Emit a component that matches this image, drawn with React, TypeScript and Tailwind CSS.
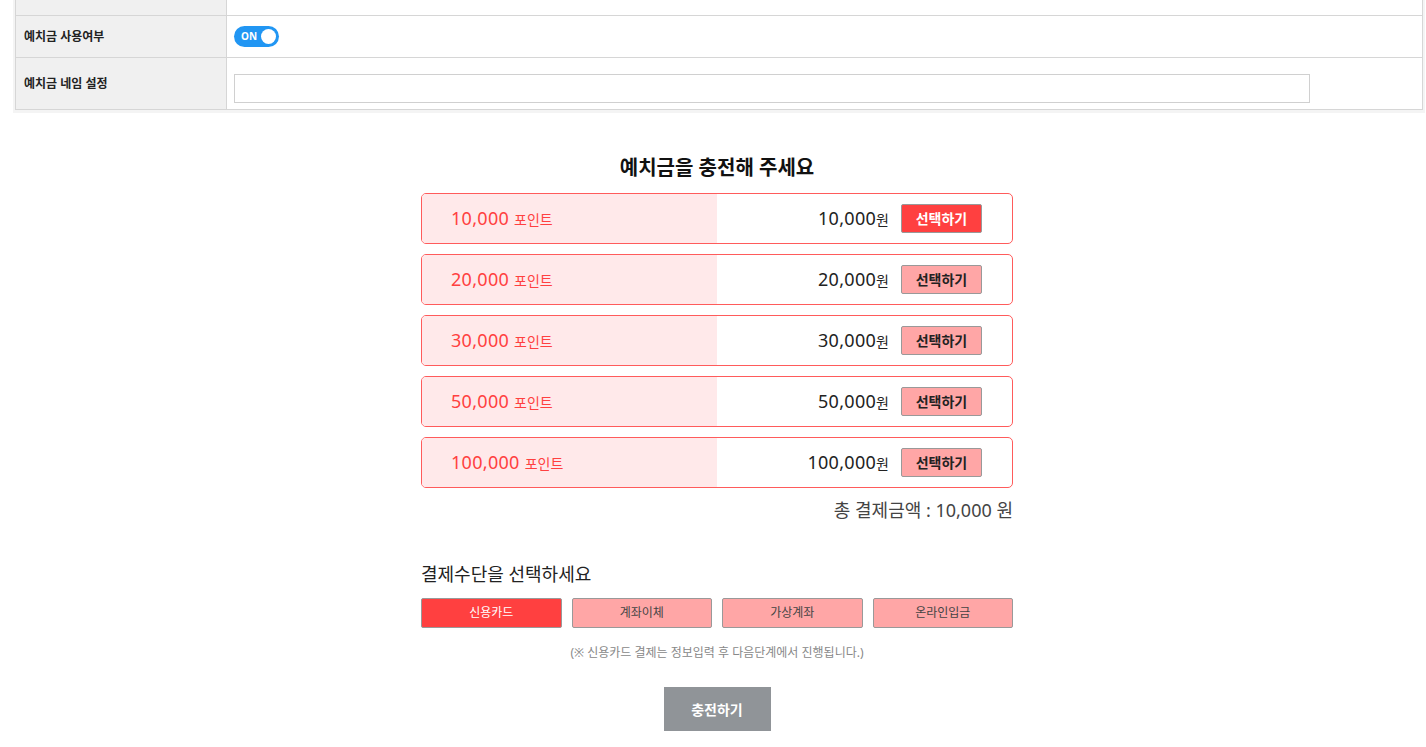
import { useState } from 'react';

const FONT = { fontFamily: '"Noto Sans", "Noto Sans CJK KR", sans-serif' };

const amounts = [10000, 20000, 30000, 50000, 100000];
const methods = ['신용카드', '계좌이체', '가상계좌', '온라인입금'];

const fmt = (n: number) => n.toLocaleString('en-US');

const App = () => {
  const [selected, setSelected] = useState(0);
  const [method, setMethod] = useState(0);

  return (
    <div className="min-h-[747px] bg-white text-[#333]" style={FONT}>
      {/* settings table */}
      <div className="ml-[13px] mr-[1px] bg-[#f4f4f4] px-[2px] pb-[3px]">
        <div className="border-x border-b border-[#d6d6d6] bg-white">
          <div className="flex h-[16px] border-b border-[#d6d6d6]">
            <div className="w-[211px] border-r border-[#d6d6d6] bg-[#f0f0f0]" />
            <div className="flex-1" />
          </div>
          <div className="flex h-[42px] border-b border-[#d6d6d6]">
            <div className="flex w-[211px] items-center border-r border-[#d6d6d6] bg-[#f0f0f0] pl-[8px] text-[12px] font-bold text-[#222]">
              예치금 사용여부
            </div>
            <div className="flex flex-1 items-center pl-[7px]">
              <div className="flex h-[21px] w-[45px] items-center justify-between rounded-full bg-[#2196f3] pl-[7px] pr-[3px]">
                <span className="text-[10px] font-bold text-white">ON</span>
                <span className="h-[15px] w-[15px] rounded-full bg-white" />
              </div>
            </div>
          </div>
          <div className="flex h-[51px]">
            <div className="flex w-[211px] items-center border-r border-[#d6d6d6] bg-[#f0f0f0] pl-[8px] text-[12px] font-bold text-[#222]">
              예치금 네임 설정
            </div>
            <div className="flex flex-1 items-start pl-[7px] pt-[16px]">
              <input
                type="text"
                className="h-[29px] w-[1076px] border border-[#d0d0d0] bg-white px-2 text-[13px] outline-none"
              />
            </div>
          </div>
        </div>
      </div>

      {/* charge section */}
      <div className="ml-[421px] w-[592px]">
        <h2 className="mt-[41px] text-center text-[20px] font-bold leading-[28px] text-[#111]">
          예치금을 충전해 주세요
        </h2>
        <div className="mt-[11px] flex flex-col gap-[10px]">
          {amounts.map((a, i) => {
            const active = i === selected;
            return (
              <div
                key={a}
                className="flex h-[51px] overflow-hidden rounded-[5px] border border-[#ff5b5b]"
              >
                <div className="flex w-1/2 items-center bg-[#ffe9ea] pl-[29px] text-[#ff4040]">
                  <span className="text-[18px] tracking-[0.3px]">{fmt(a)}</span>
                  <span className="ml-[5px] mt-[2px] text-[14px]">포인트</span>
                </div>
                <div className="flex w-1/2 items-center justify-end pr-[30px]">
                  <span className="text-[18px] tracking-[0.3px] text-[#222]">{fmt(a)}</span>
                  <span className="mt-[1px] text-[14px] text-[#222]">원</span>
                  <button
                    onClick={() => setSelected(i)}
                    className={`ml-[12px] h-[29px] w-[81px] rounded-[2px] border border-[#999] text-[14px] font-bold ${
                      active ? 'bg-[#ff4040] text-white' : 'bg-[#ffa6a6] text-[#222]'
                    }`}
                  >
                    선택하기
                  </button>
                </div>
              </div>
            );
          })}
        </div>
        <p className="mt-[9px] text-right text-[18px] leading-[26px] text-[#444]">
          총 결제금액 : {fmt(amounts[selected])} 원
        </p>

        <p className="mt-[38px] text-[18px] leading-[26px] text-[#222]">결제수단을 선택하세요</p>
        <div className="mt-[11px] grid grid-cols-4 gap-[10px]">
          {methods.map((m, i) => (
            <button
              key={m}
              onClick={() => setMethod(i)}
              className={`h-[30px] rounded-[2px] border border-[#999] text-[12px] ${
                i === method ? 'bg-[#ff4040] text-white' : 'bg-[#ffa6a6] text-[#444]'
              }`}
            >
              {m}
            </button>
          ))}
        </div>
        <p className="mt-[16px] text-center text-[12px] leading-[18px] text-[#888]">
          (※ 신용카드 결제는 정보입력 후 다음단계에서 진행됩니다.)
        </p>
        <div className="mt-[25px] flex justify-center">
          <button className="h-[44px] w-[107px] bg-[#909498] text-[14px] font-bold text-white">
            충전하기
          </button>
        </div>
      </div>
    </div>
  );
};

export default App;
